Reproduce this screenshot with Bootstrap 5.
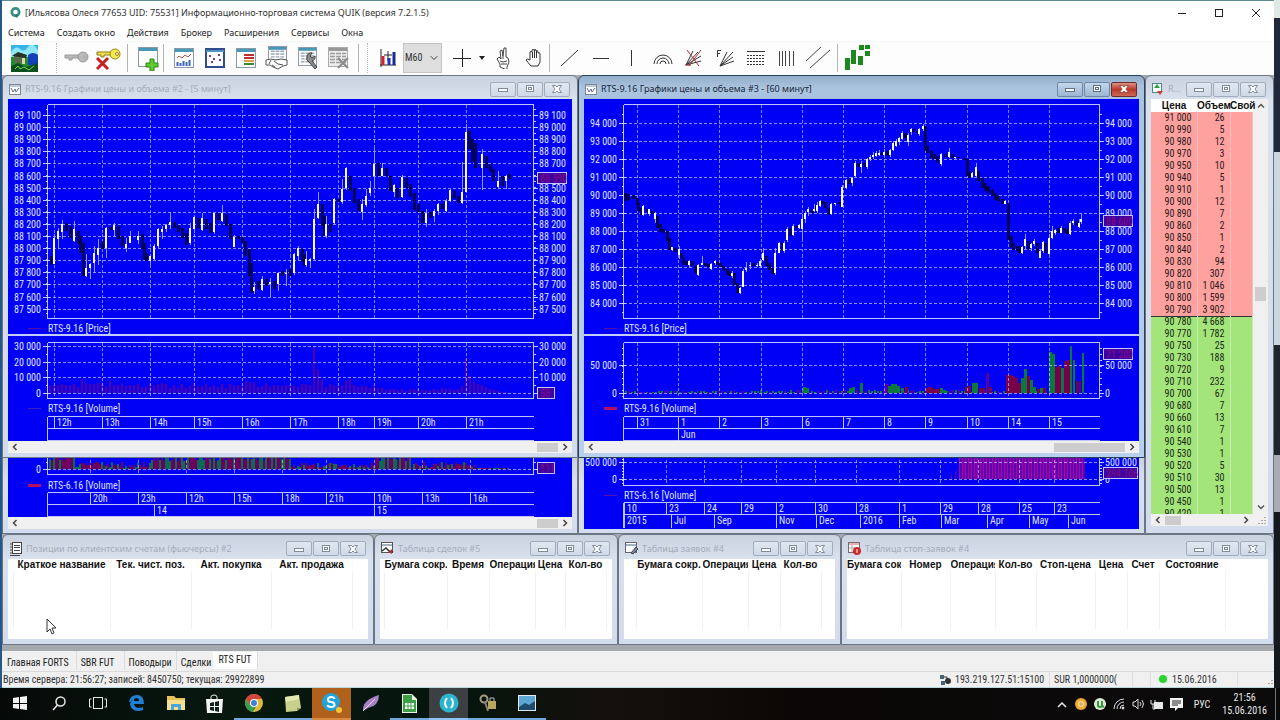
<!doctype html>
<html lang="ru">
<head>
<meta charset="utf-8">
<meta name="viewport" content="width=device-width, initial-scale=1">
<title>Информационно-торговая система QUIK</title>
<link href="https://cdn.jsdelivr.net/npm/bootstrap@5.3.0/dist/css/bootstrap.min.css" rel="stylesheet">
<style>
:root{--ui:"Noto Sans","Open Sans",sans-serif;--narrow:"Roboto Condensed",Roboto,sans-serif;--bold:"Liberation Sans",Arial,sans-serif;--blue:#0000f4}
body{font:9px/12px var(--ui);color:#222;background:linear-gradient(#dfe9e4 0 18px,#20283c 18px 152px,#cdd5de 152px 345px,#20242c 345px 455px,#a9adb3 455px 512px,#15181d 512px)}
button{font:inherit;color:inherit;background:none;border:0;padding:0}
svg{display:block;flex:none}
.desk{border-left:2px solid #25588a;padding-right:6px}
.app-frame{background:#fff;border-top:1px solid #5f8a93}
.app-title{height:23px;color:#333}
.sys-btn{width:37px;height:23px}
.main-menu{height:17px;gap:12px;padding-left:6px}
.main-menu a{color:#1c1c1c;text-decoration:none}
.tools{height:34px;background:linear-gradient(#f6f8f8,#fdfdfd 3px);padding-left:7px;overflow:hidden}
.tool{width:31px;height:32px}
.tool-sm{width:10px;height:32px}
.rule{width:1px;height:28px;background:#b4b4b4}
.rule-dots{width:0;height:30px;border-left:1px dotted #b8b8b8}
.period{width:39px;height:30px;background-color:#dedede;border:1px solid #c4c4c4;border-radius:0;padding:0 12px 0 1px;font:10px/12px var(--narrow);color:#333;background-position:right 3px center;background-size:8px 8px}
.mdi{background:#a5a8ac}
.row-charts{display:grid;grid-template-columns:minmax(0,576fr) minmax(0,567fr) 129px}
.row-tables{display:grid;grid-template-columns:minmax(0,372fr) minmax(0,244fr) minmax(0,223fr) minmax(0,433fr)}
.win{border:1px solid #6b7583;border-radius:6px 6px 0 0;padding:0 5px 4px;background:#d3dced;background-image:linear-gradient(#c9d2de,#d9e1ee 24px,#d3dcee)}
.row-tables .win{padding-bottom:5px}
.win.is-active{background:#b7cfea linear-gradient(#93aecb,#abc4de 12px,#a9c3e0 24px,#b9d1ec);border-color:#27405c}
.win.is-under{border-top:0;border-radius:0}
.win-bar{height:23px;gap:4px;padding:3px 2px 0 1px;color:#a3adbb}
.row-tables .win-bar{height:24px}
.is-active .win-bar{color:#16263c}
.ctl{gap:1px}
.win-btn{width:26px;height:15px;border:1px solid #a0abbc;border-radius:2px;background:linear-gradient(#e0e7f1,#cfd9e7);color:#7f8a9c}
.is-active .win-btn{background:linear-gradient(#c5d6ea,#9cb6d2);border-color:#6e87a5;color:#5b7088}
.is-active .win-btn.closes{background:linear-gradient(#dc9183,#b93a2b 50%,#cf6654);border-color:#6b2d2a;color:#9c4a40}
.plot{display:block;width:100%;background:var(--blue);font:10px/12px var(--narrow);overflow:hidden}
.plot text{fill:#dfe2ff}
.plot-gap{height:2px;background:#c3ccff}
.hbar{height:12px;background:#f0f0f0}
.hbar button{width:14px;height:12px}
.thumb{height:9px;background:#cdcdcd}
.thumb-s{width:21px}.thumb-l{width:71px}
.book-body{height:415px;overflow:hidden;background:#f0f0f0}
.book{table-layout:fixed;width:102px;font:10px/12px var(--narrow);color:#2a1a1a;background:#fff}
.book th{font:bold 10px/12px var(--bold);color:#111;padding:0;height:13px;white-space:nowrap;text-align:center}
.book td{padding:0 5px 0 0;height:12px;line-height:12px;text-align:right;border-right:1px solid #f4bcbc;background:#ffa19f}
.book .bid td{background:#a3e57b;border-color:#c3eeaa;color:#1a2a12}
.book .edge td{box-shadow:inset 0 1px #333}
.vbar{width:15px}
.vbar button{height:14px;width:15px}
.vthumb{width:11px;height:14px;background:#cdcdcd;margin-top:174px}
.sheet{height:80px;background:#fff;overflow:hidden}
.sheet table{table-layout:fixed;width:100%;font:bold 10px/12px var(--bold);color:#111}
.sheet th,.sheet td{padding:0;border-right:1px solid #f1f1f4;white-space:nowrap;overflow:hidden;text-align:center;vertical-align:top}
.sheet th{height:14px;border-color:#fafafa}.sheet td{height:56px}
.sheet th:last-child,.sheet td:last-child{border:0}
.pages{height:20px;background:#f0f0f0;padding-left:2px;font:10px/12px var(--narrow)}
.pages button{padding:5px 4px 0;height:19px;border-right:1px solid #dcdcdc}
.pages .p-main{padding-right:7px;padding-left:3px}
.pages .p-sbr{padding-right:9px}
.pages .p-last{padding-right:2px;border:0}
.pages .active{background:#fff;padding:2px 5px 3px;height:17px;margin-top:1px}
.state{height:17px;background:#f0f0f0;border-top:1px solid #dadada;border-bottom:1px solid #bcd6de;padding-left:1px;font:10px/15px var(--narrow);color:#333}
.state .cell{border-left:1px solid #dedede;height:15px}
.c-ip{width:110px}.c-sur{width:83px}.c-gap{width:18px}.c-date{width:87px}.c-grip{width:37px}
.taskbar{height:32px;background:linear-gradient(90deg,#050a08,#07180f 18%,#06140e 36%,#15100a 48%,#0a0706 62%,#0c0b0c);color:#e8e8e8;font:10px/13px var(--narrow)}
.task{width:39px;height:32px;border-bottom:2px solid transparent}
.task.open{border-color:#6fa8dc}
.task.alert-on{background:#b0621d;border-color:#d98a3d}
.task.front{background:#3c4043;border-color:#8cc4f5}
.tray{width:19px;height:32px}
.pointer{position:absolute;left:46px;top:618px}
</style>
</head>
<body>
<svg width="0" height="0" class="position-absolute" aria-hidden="true">
<symbol id="w-min" viewBox="0 0 12 10"><rect x="1.500" y="4.500" width="9" height="3" fill="#fff" stroke="currentColor"/></symbol>
<symbol id="w-max" viewBox="0 0 12 10"><rect x="2.500" y="1.500" width="7" height="6" fill="#fff" stroke="currentColor"/><rect x="4.500" y="3.500" width="3" height="2" fill="none" stroke="currentColor"/></symbol>
<symbol id="w-close" viewBox="0 0 12 10"><path d="M1.500 1.500h3L6 3l1.500-1.500h3L8 5l2.500 3.500h-3L6 7 4.500 8.500h-3L4 5z" fill="#fff" stroke="currentColor"/></symbol>
<symbol id="a-left" viewBox="0 0 8 8"><path d="M5.500 1 2.500 4l3 3" fill="none" stroke="#444" stroke-width="1.500"/></symbol>
<symbol id="a-right" viewBox="0 0 8 8"><path d="M2.500 1l3 3-3 3" fill="none" stroke="#444" stroke-width="1.500"/></symbol>
<symbol id="a-up" viewBox="0 0 8 8"><path d="M1 5.500l3-3 3 3" fill="none" stroke="#555" stroke-width="1.500"/></symbol>
<symbol id="a-down" viewBox="0 0 8 8"><path d="M1 2.500l3 3 3-3" fill="none" stroke="#555" stroke-width="1.500"/></symbol>
<symbol id="t-chart" viewBox="0 0 12 11"><rect x=".5" y=".5" width="11" height="10" fill="#fff" stroke="#7c8797"/><path d="M1 2h10" stroke="#7b95b5"/><path d="M2 4l2 4 2-3 1 3 3-4" fill="none" stroke="#5f6d86"/></symbol>
<symbol id="s-page" viewBox="0 0 20 20"><rect x=".5" y=".5" width="19" height="19" fill="#fff" stroke="#8b98a8"/><path d="M1 2.500h18" stroke="#4a98b8" stroke-width="3"/></symbol>
<symbol id="s-grid" viewBox="0 0 20 20"><path d="M3 6.500h14M3 9.500h14M3 12.500h14M3 15.500h14" stroke="#9aa7b5" stroke-width="1.500" stroke-dasharray="4 1"/></symbol>
</svg>

<div class="d-flex flex-column min-vh-100">
<main class="desk flex-grow-1 d-flex flex-column">
<div class="app-frame flex-grow-1 d-flex flex-column">
  <header class="app-title d-flex align-items-center">
    <svg class="ms-2 me-1" width="11" height="14" viewBox="0 0 12 14"><circle cx="6" cy="6" r="4" fill="none" stroke="#3b8f86" stroke-width="3"/><path d="M5 9h3v4z" fill="#1f6d66"/></svg>
    <span class="text-truncate">[Ильясова Олеся 77653 UID: 75531] Информационно-торговая система QUIK (версия 7.2.1.5)</span>
    <div class="ms-auto d-flex">
      <button class="sys-btn" aria-label="Свернуть"><svg class="m-auto" width="10" height="10"><path d="M1 5.500h8" stroke="#222"/></svg></button>
      <button class="sys-btn" aria-label="Развернуть"><svg class="m-auto" width="10" height="10"><rect x="1.500" y="1.500" width="7" height="7" fill="none" stroke="#222"/></svg></button>
      <button class="sys-btn" aria-label="Закрыть"><svg class="m-auto" width="10" height="10"><path d="M1 1l8 8M9 1L1 9" stroke="#222"/></svg></button>
    </div>
  </header>
  <nav class="main-menu d-flex align-items-center">
    <a href="#">Система</a><a href="#">Создать окно</a><a href="#">Действия</a><a href="#">Брокер</a><a href="#">Расширения</a><a href="#">Сервисы</a><a href="#">Окна</a>
  </nav>

  <div class="tools d-flex align-items-center">
    <button class="tool" aria-label="Рабочий стол"><svg class="m-auto" width="27" height="27"><rect width="27" height="27" fill="#36b6e8"/><path d="M0 7q5-7 9-3t8-2 10 3v7H0z" fill="#8fe6f5"/><path d="M0 12h27v15H0z" fill="#1d8f35"/><path d="M17 10q5-4 10 0v10H17z" fill="#1440b8"/><path d="M3 9h11v9H3z" fill="#5d6a4c"/><path d="M1 11l6-4 9 3-1 3z" fill="#253423"/><path d="M0 21l7-3 8 4 12-4v9H0z" fill="#0b4f20"/><path d="M4 24l3-3 2 3 4-2 5 3 5-4" stroke="#6fdf40" fill="none"/><path d="M11 13h3v6h-3z" fill="#d8d8a8"/></svg></button>
    <span class="rule-dots ms-3 me-1"></span>
    <button class="tool" aria-label="Подключиться"><svg class="m-auto" width="26" height="26" fill="#b9b9b9" stroke="#999"><path d="M1 10h14v3H8v2H5v-2H1z"/><circle cx="19" cy="12" r="5"/><circle cx="21" cy="12" r="1" fill="#fff"/></svg></button>
    <button class="tool" aria-label="Отключиться"><svg class="m-auto" width="26" height="26"><path d="M2 7h14v3H9v2H6v-2H2z" fill="#f4e34c" stroke="#8d7a13"/><circle cx="20" cy="9" r="5" fill="#f7e950" stroke="#9b8716"/><circle cx="22" cy="9" r="1.500" fill="#fff" stroke="#9b8716"/><path d="M2 13l11 11M13 13L2 24" stroke="#c4211f" stroke-width="3"/></svg></button>
    <span class="rule mx-1"></span>
    <button class="tool" aria-label="Новое окно"><svg class="m-auto" width="24" height="26"><use href="#s-page" x="2" y="2" width="20" height="20"/><path d="M14 14h4v4h4v4h-4v4h-4v-4h-4v-4h4z" fill="#5ecb31" stroke="#2b8312"/></svg></button>
    <span class="rule me-1"></span>
    <button class="tool" aria-label="График"><svg class="m-auto" width="20" height="20"><use href="#s-page" width="20" height="20"/><path d="M3 10l2-2 3 2 3-3 3 2 3-3" stroke="#c34d4d" fill="none"/><path d="M3.500 18v-4m3 4v-3m3 3v-5m3 5v-4m3 4v-6" stroke="#3d67b4" stroke-width="2"/></svg></button>
    <button class="tool" aria-label="Точечный график"><svg class="m-auto" width="20" height="20"><rect x="1" y="1" width="18" height="18" fill="#fff" stroke="#324b8f" stroke-width="2"/><path d="M1 3h18" stroke="#4a98b8" stroke-width="2"/><path d="M4 8h2m2 3h2m3-4h2m-9 7h2m6-2h2" stroke="#7a3b7e" stroke-width="2"/></svg></button>
    <button class="tool" aria-label="Стакан"><svg class="m-auto" width="20" height="20"><use href="#s-page" width="20" height="20"/><path d="M8 7h10M8 10h10" stroke="#bd2e2e" stroke-width="2"/><path d="M8 13h10" stroke="#d9a13a" stroke-width="2"/><path d="M8 16h10" stroke="#3d8a2e" stroke-width="2"/></svg></button>
    <button class="tool" aria-label="Таблица сделок"><svg class="m-auto" width="24" height="24"><use href="#s-page" x="3" width="19" height="19"/><use href="#s-grid" x="3" y="-1" width="19" height="19"/><path d="M1 14l5-1 5 1 5-1 6 1v5l-4 1-5 3-5-2-3-2H1z" fill="#fff" stroke="#555"/><path d="M9 15l4 3 5 1M7 19l3 2M6 14l-2 4" stroke="#555" fill="none"/></svg></button>
    <button class="tool" aria-label="Настройка таблицы"><svg class="m-auto" width="24" height="24"><use href="#s-page" x="2" y="1" width="19" height="19"/><use href="#s-grid" x="2" y="1" width="19" height="19"/><path d="M11 11a4 4 0 0 1 5-4l-2 3 2 2 3-2a4 4 0 0 1-3 5l5 6-2 2-6-7a4 4 0 0 1-2-5z" fill="#8c8c8c" stroke="#444"/></svg></button>
    <button class="tool" aria-label="Удалить таблицу" disabled><svg class="m-auto" width="24" height="24"><rect x="1.500" y="1.500" width="19" height="19" fill="#eee" stroke="#aaa"/><path d="M2 3.500h18" stroke="#999" stroke-width="3"/><path d="M3 7.500h16M3 10.500h16M3 13.500h16M3 16.500h16" stroke="#9c9c9c" stroke-width="1.500" stroke-dasharray="5 1"/><path d="M11 12l10 10M21 12L11 22" stroke="#8a8a8a" stroke-width="2"/></svg></button>
    <span class="rule ms-1 me-2"></span><span class="rule-dots me-1"></span>
    <button class="tool" aria-label="Свечи"><svg class="m-auto" width="18" height="20"><path d="M2 1v18M9 3v10M5 7h8" stroke="#222"/><path d="M1 17h16" stroke="#222"/><path d="M4 8v9" stroke="#c23" stroke-width="3"/><path d="M10 10v7" stroke="#2333b8" stroke-width="3"/><path d="M15 4v13" stroke="#1a2a9c" stroke-width="3"/></svg></button>
    <select class="period form-select" aria-label="Период"><option>M60</option></select>
    <button class="tool ms-1" aria-label="Перекрестие"><svg class="m-auto" width="20" height="20"><path d="M10.500 1v18M1 10.500h18" stroke="#222"/></svg></button>
    <button class="tool-sm" aria-label="Выбор указателя"><svg class="m-auto" width="6" height="4"><path d="M0 0h6L3 4z" fill="#222"/></svg></button>
    <button class="tool" aria-label="Выделение"><svg class="m-auto" width="16" height="22" fill="#fff" stroke="#444"><path d="M5 20v-3L2 12l2-2 2 2-1-8 2-1 1 6 1-8 2 0v9l2 1 1 4-2 5v3z"/><path d="M5 14l3 1 4-1M6 17h6M8 9v3"/></svg></button>
    <button class="tool" aria-label="Прокрутка"><svg class="m-auto" width="18" height="20" fill="#fff" stroke="#333"><path d="M6 18l-5-6q1-2 4 0V4q1-1 2 0V2q1-1 2 0v0q1-1 2 0v1q2-1 2 1v1q2-1 2 1v8l-2 4z"/><path d="M7.500 4v6m2-8v8m2-7v7"/></svg></button>
    <span class="rule me-1"></span>
    <button class="tool" aria-label="Линия"><svg class="m-auto" width="20" height="18"><path d="M1 17L18 1" stroke="#333"/></svg></button>
    <button class="tool" aria-label="Горизонтальная линия"><svg class="m-auto" width="18" height="18"><path d="M1 9.500h16" stroke="#333"/></svg></button>
    <button class="tool" aria-label="Вертикальная линия"><svg class="m-auto" width="18" height="18"><path d="M8.500 1v16" stroke="#333"/></svg></button>
    <button class="tool" aria-label="Дуги Фибоначчи"><svg class="m-auto" width="20" height="18" fill="none" stroke="#333"><path d="M1 15a9 9 0 0 1 18 0M4 15a6 6 0 0 1 12 0M7 15a3 3 0 0 1 6 0"/></svg></button>
    <button class="tool" aria-label="Линии Ганна"><svg class="m-auto" width="20" height="20" stroke="#333"><path d="M2 17L9 3M2 17L14 4M2 17l15-9M2 17l15-4" /><path d="M3 2l12 16M5 18L17 2M1 17h6" stroke="#a8353a"/></svg></button>
    <button class="tool" aria-label="Веер Фибоначчи"><svg class="m-auto" width="20" height="20" stroke="#333" fill="none"><path d="M5 18L12 4M5 18L18 4M5 18l13-9M5 18l14-5"/><path d="M2.500 9V2.500H6M3 5.500h2"/></svg></button>
    <button class="tool" aria-label="Уровни"><svg class="m-auto" width="18" height="18" stroke="#333"><path d="M0 2.500h18"/><path d="M0 6.500h18M0 9.500h18M0 12.500h18M0 15.500h18" stroke-dasharray="2 1"/></svg></button>
    <button class="tool" aria-label="Временные зоны"><svg class="m-auto" width="18" height="18" stroke="#444"><path d="M1.500 2v15M4.500 2v15M7.500 2v15M11.500 2v15M15.500 2v15"/></svg></button>
    <button class="tool" aria-label="Канал"><svg class="m-auto" width="26" height="24" stroke="#444"><path d="M1 15L16 1M5 22L25 4"/></svg></button>
    <span class="rule mx-1"></span>
    <button class="tool" aria-label="Индикаторы"><svg class="m-auto" width="28" height="28" fill="#1a8a1e"><path d="M1 14h5v12H1zM7 6h5v14H7zM14 12h5v9h-5zM15 1h5v5h-5zM21 1h5v4h-5zM21 7h5v5h-5z"/></svg></button>
  </div>

  <div class="mdi flex-grow-1 d-flex flex-column">
    <div class="row-charts">
      <div>
        <section class="win">
          <div class="win-bar d-flex align-items-center"><svg width="12" height="11"><use href="#t-chart"/></svg><span class="text-truncate flex-grow-1">RTS-9.16 Графики цены и объема #2 - [5 минут]</span><div class="d-flex ctl"></div></div>
          <svg class="plot" data-plot="price5" height="235"></svg>
          <div class="plot-gap"></div>
          <svg class="plot" data-plot="vol5" height="105"></svg>
          <div class="hbar d-flex align-items-center"><button aria-label="Влево"><svg class="m-auto" width="8" height="8"><use href="#a-left"/></svg></button><span class="thumb thumb-s ms-auto"></span><button aria-label="Вправо"><svg class="m-auto" width="8" height="8"><use href="#a-right"/></svg></button></div>
        </section>
        <section class="win is-under">
          <svg class="plot" data-plot="under5" height="59"></svg>
          <div class="hbar d-flex align-items-center"><button aria-label="Влево"><svg class="m-auto" width="8" height="8"><use href="#a-left"/></svg></button><span class="thumb thumb-s ms-auto"></span><button aria-label="Вправо"><svg class="m-auto" width="8" height="8"><use href="#a-right"/></svg></button></div>
        </section>
      </div>
      <div>
        <section class="win is-active">
          <div class="win-bar d-flex align-items-center"><svg width="12" height="11"><use href="#t-chart"/></svg><span class="text-truncate flex-grow-1">RTS-9.16 Графики цены и объема #3 - [60 минут]</span><div class="d-flex ctl"></div></div>
          <svg class="plot" data-plot="price60" height="235"></svg>
          <div class="plot-gap"></div>
          <svg class="plot" data-plot="vol60" height="105"></svg>
          <div class="hbar d-flex align-items-center"><button aria-label="Влево"><svg class="m-auto" width="8" height="8"><use href="#a-left"/></svg></button><span class="thumb thumb-l ms-auto"></span><button aria-label="Вправо"><svg class="m-auto" width="8" height="8"><use href="#a-right"/></svg></button></div>
        </section>
        <section class="win is-under">
          <svg class="plot" data-plot="under60" height="71"></svg>
        </section>
      </div>
      <section class="win">
        <div class="win-bar d-flex align-items-center"><svg width="12" height="12"><rect x=".5" y=".5" width="9" height="9" fill="#fff" stroke="#4a8a8a"/><path d="M5 1l3 4H2z" fill="#2f9e3c"/><path d="M8 12l-3-4h6z" fill="#d23c2e"/></svg><span class="flex-grow-1">R...</span><div class="d-flex ctl"></div></div>
        <div class="book-body d-flex">
          <div><table class="book"><colgroup><col style="width:46px"><col style="width:33px"><col></colgroup><thead><tr><th>Цена</th><th>Объем</th><th>Свой</th></tr></thead><tbody id="book"></tbody></table></div>
          <div class="vbar d-flex flex-column align-items-center"><button aria-label="Вверх"><svg class="m-auto" width="8" height="8"><use href="#a-up"/></svg></button><span class="vthumb"></span><button class="mt-auto" aria-label="Вниз"><svg class="m-auto" width="8" height="8"><use href="#a-down"/></svg></button></div>
        </div>
        <div class="hbar d-flex align-items-center"><button aria-label="Влево"><svg class="m-auto" width="8" height="8"><use href="#a-left"/></svg></button><span class="thumb px-2"></span><button class="ms-auto" aria-label="Вправо"><svg class="m-auto" width="8" height="8"><use href="#a-right"/></svg></button><svg width="15" height="12" stroke="#aaa"><path d="M12 3v1m0 2v1m0 2v1M9 6v1m0 2v1M6 9v1" stroke-width="2"/></svg></div>
      </section>
    </div>

    <div class="row-tables">
      <section class="win">
        <div class="win-bar d-flex align-items-center"><svg width="13" height="14"><rect x="3.500" y=".5" width="9" height="11" fill="#fff" stroke="#444"/><path d="M1 2h2M1 5h2M1 8h2M1 11h2M5 3.500h6M5 5.500h6M5 8.500h6M1 13.500h10" stroke="#444"/></svg><span class="text-truncate flex-grow-1">Позиции по клиентским счетам (фьючерсы) #2</span><div class="d-flex ctl"></div></div>
        <div class="sheet"><table data-cols="5: |97:Краткое название|81:Тек. чист. поз.|80:Акт. покупка|81:Акт. продажа"></table></div>
      </section>
      <section class="win">
        <div class="win-bar d-flex align-items-center"><svg width="13" height="13"><rect x=".5" y=".5" width="11" height="10" fill="#fff" stroke="#555"/><path d="M1 3h10" stroke="#468"/><path d="M1 9l4-3 3 3 4 1" stroke="#333" fill="none" stroke-width="1.500"/><path d="M8 10l3-3v5z" fill="#c22"/></svg><span class="text-truncate flex-grow-1">Таблица сделок #5</span><div class="d-flex ctl"></div></div>
        <div class="sheet"><table data-cols="4: |63:Бумага сокр.|42:Время|46:Операция|30:Цена|41:Кол-во"></table></div>
      </section>
      <section class="win">
        <div class="win-bar d-flex align-items-center"><svg width="13" height="13"><rect x=".5" y=".5" width="11" height="10" fill="#fff" stroke="#667"/><path d="M1 3h10" stroke="#468"/><path d="M6 11l5-6 2 2-5 5z" fill="#789" stroke="#445"/></svg><span class="text-truncate flex-grow-1">Таблица заявок #4</span><div class="d-flex ctl"></div></div>
        <div class="sheet"><table data-cols="12: |66:Бумага сокр.|46:Операция|32:Цена|41:Кол-во"></table></div>
      </section>
      <section class="win">
        <div class="win-bar d-flex align-items-center"><svg width="13" height="13"><rect x=".5" y=".5" width="11" height="10" fill="#fff" stroke="#767"/><path d="M1 2h10" stroke="#c66"/><path d="M4 3v7M1 6h10" stroke="#aaa"/><circle cx="9" cy="9" r="4" fill="#cf2a2a"/><path d="M9 7v4" stroke="#fff"/></svg><span class="text-truncate flex-grow-1">Таблица стоп-заявок #4</span><div class="d-flex ctl"></div></div>
        <div class="sheet"><table data-cols="54:Бумага сок|49:Номер|45:Операция|41:Кол-во|59:Стоп-цена|32:Цена|32:Счет|66:Состояние"></table></div>
      </section>
    </div>
  </div>

  <div class="pages d-flex align-items-start mt-auto">
    <button class="p-main">Главная FORTS</button><button class="p-sbr">SBR FUT</button><button>Поводыри</button><button class="p-last">Сделки</button><button class="active">RTS FUT</button>
  </div>
  <footer class="state d-flex align-items-center">
    <span class="text-truncate flex-grow-1">Время сервера: 21:56:27; записей: 8450750; текущая: 29922899</span>
    <span class="d-flex align-items-center c-ip gap-1"><svg width="12" height="12"><rect x="1" y="1" width="4" height="4" fill="#467"/><rect x="2" y="7" width="4" height="4" fill="#467"/><circle cx="9" cy="7" r="3" fill="#333"/><path d="M5 3h3v3" stroke="#333" fill="none"/></svg>193.219.127.51:15100</span>
    <span class="cell c-sur ps-1">SUR 1,0000000(</span><span class="cell c-gap"></span>
    <span class="cell c-date d-flex align-items-center gap-1 ps-2"><svg width="9" height="9"><circle cx="4" cy="4" r="4" fill="#27d52b"/></svg>15.06.2016</span>
    <span class="cell c-grip d-flex justify-content-end align-items-end"><svg width="9" height="9"><path d="M7 2v1m0 2v1M4 5v1" stroke="#aaa" stroke-width="2"/></svg></span>
  </footer>
</div>
</main>

<div class="taskbar d-flex">
  <button class="task" aria-label="Пуск"><svg class="m-auto" width="14" height="14" fill="#f4f4f4"><path d="M0 2l6-1v6H0zM7 1l7-1v7H7zM0 8h6v5l-6-1zM7 8h7v6l-7-1z"/></svg></button>
  <button class="task" aria-label="Поиск"><svg class="m-auto" width="14" height="15" fill="none" stroke="#e8e8e8" stroke-width="1.500"><circle cx="8.500" cy="5.500" r="4.500"/><path d="M5.500 9L1 14"/></svg></button>
  <button class="task" aria-label="Представление задач"><svg class="m-auto" width="18" height="12" fill="none" stroke="#e8e8e8"><rect x="4.500" y=".5" width="9" height="11"/><path d="M2.500 2H.5v8h2M15.500 2h2v8h-2"/></svg></button>
  <button class="task" aria-label="Edge"><svg class="m-auto" width="17" height="18"><path d="M1 8Q2 1 9 1q7 0 7 9H6q1 4 5 4 2 0 4-1v3q-2 1-5 1-7 0-8-7 0-3 3-5-2 2-2 3zM6 7h5q0-3-2.500-3T6 7z" fill="#1e7fd4" fill-rule="evenodd"/></svg></button>
  <button class="task" aria-label="Проводник"><svg class="m-auto" width="18" height="16"><path d="M0 1h7l2 2h9v12H0z" fill="#e8c35a"/><path d="M0 5h18v10H0z" fill="#f7e08c"/><path d="M4 15V9h10v6h-3v-3H7v3z" fill="#4aa5d8"/></svg></button>
  <button class="task" aria-label="Магазин"><svg class="m-auto" width="17" height="19"><path d="M5 6V3q0-2 3-2t3 2v3" fill="none" stroke="#f0f0f0"/><path d="M0 5h17l-1 14H1z" fill="#f4f4f4"/><path d="M4 9l4-1v4H4zM9 8l4-1v5H9zM4 13h4v4l-4-1zM9 13h4v5l-4-1z" fill="#10201a"/></svg></button>
  <button class="task open" aria-label="Chrome"><svg class="m-auto" width="18" height="18"><circle cx="9" cy="9" r="9" fill="#e0b93a"/><path d="M1 5A9 9 0 0 1 17 5H9L5 11z" fill="#d3463a"/><path d="M1 5a9 9 0 0 0 7 13l4-7-7 0z" fill="#3b9c50"/><circle cx="9" cy="9" r="4" fill="#fff"/><circle cx="9" cy="9" r="3" fill="#3f7fd8"/></svg></button>
  <button class="task open" aria-label="Заметки"><svg class="m-auto" width="18" height="17"><path d="M1 2l14-2 2 13-4 3-11 1z" fill="#c9d08b"/><path d="M1 2l14-2v4L2 7z" fill="#e3e8ae"/><path d="M13 16v-3h4z" fill="#8e9659"/></svg></button>
  <button class="task alert-on" aria-label="Skype"><svg class="m-auto" width="22" height="22"><circle cx="10" cy="10" r="9" fill="#1fa5dd"/><path d="M13.500 7Q13 5 10 5T7 7.500 10 10t3.500 2.500T10 15q-3 0-3.500-2" fill="none" stroke="#fff" stroke-width="2"/><circle cx="18" cy="18" r="3" fill="#f5c431"/></svg></button>
  <button class="task" aria-label="Перо"><svg class="m-auto" width="18" height="18"><path d="M1 17Q0 6 17 1q0 11-11 13z" fill="#a880c8"/><path d="M1 17L13 5" stroke="#e6d6f2"/></svg></button>
  <button class="task open" aria-label="Calc"><svg class="m-auto" width="15" height="19"><path d="M0 0h10l5 5v14H0z" fill="#eaf6e4"/><path d="M1 1h9v5h4v12H1z" fill="#3ba046"/><path d="M3 9h9v6H3z" fill="#fff"/><path d="M3 12h9M6 9v6M9 9v6" stroke="#3ba046"/></svg></button>
  <button class="task front" aria-label="QUIK"><svg class="m-auto" width="20" height="20"><circle cx="10" cy="10" r="9.500" fill="#2bb4cf"/><path d="M8 5q-4 5 0 10M12 5q4 5 0 10" fill="none" stroke="#fff" stroke-width="2"/></svg></button>
  <button class="task open" aria-label="Ключи"><svg class="m-auto" width="18" height="18"><circle cx="5" cy="5" r="3.500" fill="none" stroke="#a59a86" stroke-width="2"/><path d="M6 8l3 9" stroke="#8a8172" stroke-width="2"/><rect x="9" y="7" width="8" height="8" fill="#b9a55e"/><path d="M11 7V4h4v3" fill="none" stroke="#bbb"/></svg></button>
  <button class="task open" aria-label="Изображения"><svg class="m-auto" width="18" height="16"><rect width="18" height="16" fill="#dfe9f0"/><rect x="1" y="1" width="16" height="14" fill="#5ea6d4"/><path d="M1 12l6-4 4 2 6-4v9H1z" fill="#1f4b6b"/></svg></button>
  <div class="ms-auto d-flex">
    <button class="tray" aria-label="Скрытые значки"><svg class="m-auto" width="10" height="7"><path d="M1 6l4-4 4 4" fill="none" stroke="#eee" stroke-width="1.500"/></svg></button>
    <button class="tray" aria-label="Защита"><svg class="m-auto" width="13" height="13"><circle cx="6" cy="6" r="6" fill="#f0a736"/><circle cx="6" cy="6" r="2.500" fill="none" stroke="#fff3cf"/></svg></button>
    <button class="tray" aria-label="uTorrent"><svg class="m-auto" width="13" height="13"><circle cx="6" cy="6" r="6" fill="#dcebd6"/><path d="M4 3v5q2 2 4 0V3m0 5 2 1" fill="none" stroke="#3f9440" stroke-width="2"/></svg></button>
    <button class="tray" aria-label="Wi-Fi"><svg class="m-auto" width="12" height="12" fill="none" stroke="#ddd"><path d="M1 11A10 10 0 0 1 11 1M4 11a7 7 0 0 1 7-7M7 11a4 4 0 0 1 4-4"/><circle cx="10" cy="10" r="1" fill="#fff"/></svg></button>
    <button class="tray" aria-label="Звук"><svg class="m-auto" width="13" height="12" fill="none" stroke="#ddd"><path d="M1 4h2l3-3v10L3 8H1zM8 4q2 2 0 4M10 2q3 4 0 8"/></svg></button>
    <button class="tray" aria-label="Батарея"><svg class="m-auto" width="14" height="11"><rect x="4" y="3" width="9" height="7" fill="#e8e8e8"/><path d="M1 1v4h4V1M3 5v5h2" stroke="#e8e8e8" fill="none"/></svg></button>
    <button class="tray" aria-label="Уведомления"><svg class="m-auto" width="13" height="13"><path d="M0 0h13v10H8l-3 3v-3H0z" fill="#f4f4f4"/><path d="M2 3h9M2 5h9M2 7h6" stroke="#222"/></svg></button>
    <button class="px-2">РУС</button>
    <button class="px-1 text-center">21:56<br>15.06.2016</button>
    <span class="border-start border-secondary ms-1 ps-1"></span>
  </div>
</div>
</div>
<svg class="pointer" width="11" height="17"><path d="M1 1v13l3-3 2 5 2-1-2-5h4z" fill="#fff" stroke="#333"/></svg>

<script src="https://cdn.jsdelivr.net/npm/bootstrap@5.3.0/dist/js/bootstrap.bundle.min.js"></script>
<script>
// Window control buttons
document.querySelectorAll('.ctl').forEach(c => {
  c.innerHTML = [['min', 'Свернуть'], ['max', 'Развернуть'], ['close', 'Закрыть']].map(([k, t]) =>
    `<button class="win-btn ${k === 'close' ? 'closes' : ''}" aria-label="${t}"><svg class="m-auto" width="12" height="10"><use href="#w-${k}"/></svg></button>`).join('');
});

// Order book
const asks = '91 000:26 90 990:5 90 980:12 90 970:3 90 950:10 90 940:5 90 910:1 90 900:12 90 890:7 90 860:2 90 850:1 90 840:2 90 830:94 90 820:307 90 810:1_046 90 800:1_599 90 790:3_902';
const bids = '90 780:4_668 90 770:1_782 90 750:25 90 730:188 90 720:9 90 710:232 90 700:67 90 680:7 90 660:13 90 610:7 90 540:1 90 530:1 90 520:5 90 510:30 90 500:13 90 450:1 90 420:1';
const level = (s, cls) => (s.match(/\d\d \d{3}:\S+/g) || []).map((r, i) => {
  const [p, v] = r.split(':');
  return `<tr class="${cls} ${cls && !i ? 'edge' : ''}"><td>${p}</td><td>${v.replace('_', ' ')}</td><td></td></tr>`;
}).join('');
document.getElementById('book').innerHTML = level(asks, '') + level(bids, 'bid');

// Empty tables: "width:caption" per column, the last column takes the rest
document.querySelectorAll('[data-cols]').forEach(t => {
  const cols = t.dataset.cols.split('|').map(c => c.split(':'));
  t.innerHTML = '<colgroup>' + cols.map(c => `<col style="width:${c[0]}px">`).join('') + '<col></colgroup><thead><tr>' +
    cols.map(c => `<th>${c[1]}</th>`).join('') + '<th></th></tr></thead><tbody><tr>' + '<td></td>'.repeat(cols.length + 1) + '</tr></tbody>';
});

// Charts. x values run over "span", y values are pixels from the top of the panel.
const range = (a, b, s) => { const r = []; for (let v = a; v <= b; v += s) r.push(v); return r; };
const money = v => String(v).replace(/\B(?=(\d{3})+$)/g, ' ');
const hours = [54, 102, 150, 194, 242, 290, 338, 374, 418, 466];
const days = [637, 678, 719, 761, 802, 843, 884, 925, 967, 1008, 1049];
const noise = i => Math.abs(Math.sin(i * 12.9898) * 43758.5453) % 1;

// [x, high, low, body top, body bottom] and [x, top, bottom], in thirds of a pixel
const up5 = [[161,480,565,485,562],[174,455,515,465,490],[186,432,490,445,468],[222,435,498,460,495],[258,535,605,575,598],[270,560,607,563,575],[282,510,590,530,560],[294,488,565,515,535],[318,453,545,455,515],[342,442,482,448,462],[378,485,528,503,515],[390,465,502,480,500],[414,465,505,480,492],[450,535,568,540,555],[462,505,555,510,550],[474,455,515,460,512],[486,450,490,460,468],[498,445,470,448,460],[510,408,458,438,448],[570,440,505,455,500],[582,420,462,423,460],[606,410,465,425,462],[642,408,475,412,470],[666,388,438,410,433],[702,478,515,483,512],[762,618,655,632,645],[786,600,645,608,640],[810,605,662,617,622],[834,588,645,592,625],[858,578,628,590,592],[882,530,595,535,592],[894,510,555,517,540],[918,525,572,550,568],[930,545,575,550,555],[942,400,555,430,550],[954,348,430,383,425],[978,420,485,445,480],[1002,365,445,370,443],[1026,310,385,340,380],[1038,272,340,275,335],[1086,370,432,385,410],[1098,340,395,360,388],[1110,315,360,335,350],[1122,215,335,265,300],[1146,262,300,275,298],[1182,325,365,328,348],[1206,298,368,303,362],[1278,400,455,410,440],[1302,400,438,405,420],[1314,380,415,385,405],[1338,370,408,375,405],[1350,340,378,343,375],[1386,258,385,348,382],[1398,145,350,168,348],[1446,218,340,235,278],[1494,285,335,315,332],[1518,298,340,300,315]];
const down5 = [[152,540,566],[198,442,465],[210,450,485],[234,465,505],[240,480,530],[248,500,600],[306,495,520],[330,452,462],[354,450,490],[366,480,510],[426,475,520],[432,500,550],[438,530,555],[522,438,455],[534,448,470],[546,455,485],[558,470,505],[594,425,455],[618,430,460],[630,440,470],[654,410,430],[678,415,450],[690,445,490],[714,480,490],[726,483,500],[736,495,540],[746,520,600],[754,560,650],[774,615,640],[798,610,630],[822,615,640],[846,585,600],[870,580,600],[906,520,560],[912,535,570],[966,385,450],[972,420,480],[990,445,470],[1014,370,380],[1050,300,345],[1062,335,380],[1074,370,405],[1134,262,300],[1158,275,300],[1170,300,345],[1192,335,365],[1218,305,335],[1230,325,365],[1242,350,400],[1254,385,410],[1266,405,440],[1290,408,425],[1326,385,400],[1362,345,365],[1374,360,380],[1408,165,220],[1416,190,260],[1426,200,275],[1458,240,275],[1470,265,290],[1480,280,315],[1506,300,330],[1526,295,310]];
const up60 = [[188,388,420,390,418],[208,398,418,400,415],[225,408,440,410,428],[277,512,525,514,523],[297,510,550,520,538],[328,552,575,555,568],[355,565,600,568,597],[366,540,568,560,565],[392,560,582,565,580],[404,553,567,556,562],[455,585,605,592,600],[480,632,652,636,650],[488,580,635,585,632],[499,558,588,575,580],[509,558,578,568,571],[530,560,572,568,570],[540,550,575,555,570],[550,515,555,530,550],[586,515,595,530,590],[596,498,532,500,530],[613,495,532,500,525],[622,452,496,460,494],[640,445,480,450,478],[657,445,460,448,456],[667,415,490,428,458],[676,405,440,410,428],[684,393,420,398,408],[702,385,410,398,405],[711,378,410,388,405],[719,373,395,375,390],[754,382,418,385,415],[765,380,390,382,385],[787,328,395,332,393],[798,310,340,312,335],[815,303,330,306,320],[825,255,305,262,300],[844,255,290,265,275],[860,245,278,250,275],[869,238,255,243,250],[878,228,250,238,243],[887,225,242,230,238],[897,222,240,230,235],[913,220,242,228,238],[930,218,242,222,238],[939,195,225,200,220],[948,190,215,195,210],[957,182,205,185,198],[966,165,192,172,190],[983,172,210,178,200],[992,155,175,160,170],[1018,155,180,160,176],[1028,145,165,150,160],[1082,230,268,235,265],[1108,215,245,228,242],[1125,243,248,244,248],[1176,288,305,292,303],[1187,260,302,272,300],[1276,372,384,375,383],[1327,510,535,513,532],[1336,475,520,488,510],[1354,500,525,505,518],[1362,490,510,495,505],[1381,520,548,525,545],[1388,495,530,498,525],[1408,475,535,485,533],[1417,450,490,465,485],[1425,458,475,462,470],[1444,450,472,455,470],[1470,435,478,442,475],[1478,430,448,435,442],[1496,430,458,440,452],[1504,410,442,430,440]];
const down60 = [[135,350,375],[145,355,372],[160,358,370],[170,365,385],[175,380,405],[182,395,415],[200,400,408],[216,405,415],[232,420,455],[240,445,468],[250,458,470],[260,465,495],[268,485,520],[286,515,528],[302,530,545],[310,545,565],[318,555,568],[336,555,570],[345,570,592],[376,560,568],[385,565,575],[412,558,568],[420,562,575],[430,570,585],[440,580,598],[448,585,600],[462,590,625],[470,620,650],[520,560,570],[558,540,570],[566,560,580],[576,575,592],[605,500,525],[630,455,480],[648,450,455],[695,398,410],[705,390,402],[727,375,385],[736,378,395],[745,395,415],[776,378,385],[782,380,392],[806,310,325],[835,262,275],[852,260,272],[905,228,238],[922,225,240],[974,170,185],[1000,160,170],[1010,165,172],[1036,150,225],[1042,210,232],[1052,225,245],[1062,235,250],[1072,240,260],[1095,235,245],[1116,235,248],[1135,244,248],[1152,245,250],[1160,250,300],[1168,285,305],[1195,285,315],[1205,305,335],[1215,320,345],[1225,330,352],[1235,340,362],[1245,350,370],[1255,360,375],[1265,368,382],[1283,380,490],[1292,480,515],[1300,500,522],[1310,510,525],[1318,510,530],[1345,495,520],[1372,500,530],[1396,500,530],[1435,455,470],[1452,455,470],[1460,460,475],[1488,435,450]];

// Volume bars: [x, height, colour, width]
const P = '#5600a4', R = '#76004c', G = '#0a7a3c', DR = '#6c005c', DG = '#0a6a58';
const spikes = {82:14, 86:10, 110:12, 246:12, 250:11, 314:46, 318:24, 322:14, 346:12, 350:14, 466:34, 470:17, 474:11, 478:9, 482:8};
const vol5 = range(50, 506, 4).map(x => [x, spikes[x] || (x > 486 ? Math.max(1, (506 - x) / 4) : x > 374 && x < 462 ? 2 + noise(x) * 3 : 5 + noise(x) * 5), P, 2]);
const under5 = range(50, 508, 2).map(x => {
  const busy = x < 76 || (x > 150 && x < 292) || (x > 374 && x < 412);
  const h = x > 474 ? 1 : busy ? 8 + noise(x) * 7 : 1 + noise(x) * 6;
  return [x, h, noise(x * 3) > .6 ? DG : DR, 2];
});
const vol60 = range(626, 1046, 3).map(x => [x, 1 + noise(x) * (x > 760 ? 2 : 1), noise(x * 7) > .5 ? G : P, 2]).concat([
  [804,6,G],[807,5,G],[850,5,G],[853,6,G],[861,10,G],[886,9,P],[889,7,G],[892,9,G],[895,9,G],[898,7,G],[902,5,G],[906,6,R],[926,5,R],[929,6,R],[932,5,R],[935,4,R],[938,4,R],[941,5,G],[944,3,G],[966,6,R],[969,7,R],[973,10,G],[976,10,G],[980,5,R],[983,5,R],[987,20,P],[990,6,R],[1007,18,R],[1010,18,R],[1013,17,R],[1016,15,R],[1019,10,R],[1022,15,G],[1025,24,G],[1028,17,R],[1031,13,G],[1034,6,G],[1038,4,R],[1041,5,G],[1044,5,R],
  [1050,41,G],[1053,39,G],[1056,26,R],[1059,27,R],[1062,25,G],[1065,32,R],[1068,33,R],[1071,47,G],[1074,33,G],[1077,12,R],[1080,12,R],[1083,40,G]].map(b => [...b, b[0] > 1068 ? 2 : 3]));
const under60 = [[952,4,'#7a0098',1],[956,8,'#7a0098',1]].concat(range(960, 1085, 3).map(x => [x, 26, '#5c00b4', 3]), range(960, 1085, 3).map(x => [x, 26, '#b400a0', 1]));

const charts = {
  price5: { span: [47, 533], right: 39, top: 5, bottom: 219, grid: hours, up: up5, down: down5,
    ticks: range(0, 16, 1).filter(i => i !== 5).map(i => [money(89100 - i * 100), 16 + i * 12.1]), leftOnly: [['88 600', 76.5]], minor: range(10, 218, 6), legend: ['RTS-9.16 [Price]', 229, '#5a10a8', 1], tag: [73, 29, '88 590'] },
  vol5: { span: [47, 533], right: 39, top: 6, bottom: 62, grid: hours, bars: vol5, zero: 57,
    ticks: [['30 000', 10], ['20 000', 26], ['10 000', 41]], leftOnly: [['0', 57]], minor: [18, 34, 49], legend: ['RTS-9.16 [Volume]', 72, '#3c20c0', 1],
    tag: [51, 17, '58'], rows: [[80, '12h 13h 14h 15h 16h 17h 18h 19h 20h 21h'.split(' ').map((l, i) => [hours[i], l])], [92, []]], end: 104 },
  under5: { span: [47, 533], right: 39, top: -4, bottom: 16, grid: [90, 138, 186, 234, 282, 326, 374, 422, 470], bars: under5, zero: 11,
    ticks: [], leftOnly: [['0', 11]], minor: [4], legend: ['RTS-6.16 [Volume]', 27, '#b0106a', 3], tag: [4, 17, '111'],
    rows: [[34, [[90, '20h'], [138, '23h'], [186, '12h'], [234, '15h'], [282, '18h'], [326, '21h'], [374, '10h'], [422, '13h'], [470, '16h']]], [46, [[154, '14'], [374, '15']]]], end: 58 },
  price60: { span: [623, 1099], right: 40, top: 5, bottom: 219, grid: days, up: up60, down: down60,
    ticks: range(0, 10, 1).map(i => [money(94000 - i * 1000), 24 + i * 18]), minor: range(15, 215, 9), legend: ['RTS-9.16 [Price]', 229, '#5a10a8', 1], tag: [116, 29, '88 600'] },
  vol60: { span: [623, 1099], right: 40, top: 6, bottom: 62, grid: days, bars: vol60, zero: 57,
    ticks: [['50 000', 29], ['0', 57]], minor: range(12, 60, 6), legend: ['RTS-9.16 [Volume]', 72, '#b0106a', 3], tag: [12, 29, '71 200'],
    rows: [[80, '31 1 2 3 6 7 8 9 10 14 15'.split(' ').map((l, i) => [days[i], l])], [92, [[678, 'Jun']]]], end: 104 },
  under60: { span: [624, 1099], right: 40, top: -4, bottom: 27, grid: [667, 705, 742, 777, 816, 857, 899, 940, 978, 1019, 1054], bars: under60, zero: 21,
    ticks: [['500 000', 4], ['0', 21]], minor: range(1, 26, 3), legend: ['RTS-6.16 [Volume]', 37, '#5a10a8', 1], tag: [9, 34, '294 106'],
    rows: [[44, [[625, '10'], [667, '23'], [705, '24'], [742, '29'], [777, '2'], [816, '30'], [857, '28'], [899, '1'], [940, '29'], [978, '28'], [1019, '25'], [1054, '23']]],
      [56, [[625, '2015'], [672, 'Jul'], [715, 'Sep'], [777, 'Nov'], [817, 'Dec'], [861, '2016'], [899, 'Feb'], [941, 'Mar'], [987, 'Apr'], [1029, 'May'], [1068, 'Jun']]]], end: 69, open: true }
};

function draw(svg) {
  const c = charts[svg.dataset.plot], W = svg.clientWidth, L = 39, Rt = W - c.right, r = Math.round;
  const X = x => r(L + (x - c.span[0]) / (c.span[1] - c.span[0]) * (Rt - L));
  const line = (x1, y1, x2, y2, o = .9, extra = '') => `<path d="M${r(x1) + .5} ${r(y1) + .5}L${r(x2) + .5} ${r(y2) + .5}" stroke="#d4d8ff" stroke-opacity="${o}" ${extra}/>`;
  const box = (x, y, w, h, f) => `<rect x="${r(x)}" y="${r(y)}" width="${w}" height="${Math.max(1, r(h))}" fill="${f}"/>`;
  const text = (x, y, s, a = 'start') => `<text x="${r(x)}" y="${r(y) + 4}" text-anchor="${a}">${s}</text>`;
  const dash = 'stroke-dasharray="3 2"';
  let o = '';
  (c.bars || []).forEach(([x, h, f, w]) => o += box(X(x) - 1, c.zero - h, w, h, f));
  c.grid.forEach(x => o += line(X(x), c.top, X(x), c.bottom, .6, dash));
  c.ticks.concat(c.leftOnly || []).forEach(([s, y]) => { o += line(L, y, Rt, y, .65, dash) + line(L - 5, y, L + 2, y) + line(Rt, y, Rt + 4, y) + text(L - 6, y, s, 'end'); });
  c.ticks.forEach(([s, y]) => o += text(Rt + 6, y, s));
  c.minor.forEach(y => o += line(L - 2, y, L, y) + line(Rt, y, Rt + 2, y));
  o += line(L, c.top, Rt, c.top) + line(L, c.bottom, Rt, c.bottom) + line(L, c.top, L, c.bottom) + line(Rt, c.top, Rt, c.bottom);
  const C = x => X(c.span[0] < 100 ? x / 3 : 580 + x / 3), Y = y => y / 3 - 23;
  (c.down || []).forEach(([x, a, b]) => o += box(C(x) - 1, Y(a), 3, (b - a) / 3, '#00005c'));
  (c.up || []).forEach(([x, h, l, a, b]) => o += box(C(x), Y(h), 1, (l - h) / 3, '#8f96ff') + box(C(x) - 1, Y(a), 2, (b - a) / 3, '#f6f8ff'));
  const [s, ly, lc, lw] = c.legend;
  o += `<path d="M20 ${ly}.5h13" stroke="${lc}" stroke-width="${lw}"/>` + text(40, ly, s);
  (c.rows || []).forEach(([y, items], i) => {
    const end = c.rows[i + 1] ? c.rows[i + 1][0] : c.end;
    o += line(L, y, Rt, y) + line(L, y, L, end);
    items.forEach(([x, l]) => o += line(X(x), y, X(x), end) + text(X(x) + 3, y + 6, l));
  });
  if (c.end && !c.open) o += line(L, c.end, Rt, c.end);
  const [ty, tw, tt] = c.tag;
  o += `<rect x="${Rt + 4}.5" y="${ty}.5" width="${tw}" height="11" fill="#3c00a4" stroke="#c9c4ff"/><text x="${Rt + 7}" y="${ty + 10}" style="fill:#8a0878">${tt}</text>`;
  svg.innerHTML = `<g shape-rendering="crispEdges">${o}</g>`;
}
const redraw = () => document.querySelectorAll('[data-plot]').forEach(draw);
redraw();
addEventListener('resize', redraw);
</script>
</body>
</html>
